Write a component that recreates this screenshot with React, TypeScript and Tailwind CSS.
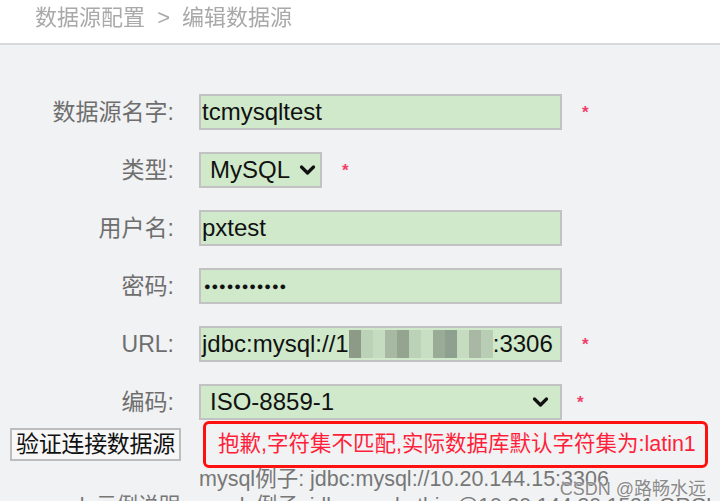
import { ReactNode } from 'react'

const FONT = { fontFamily: '"Liberation Sans", Arial, "Noto Sans CJK SC", sans-serif' }

function Star({ className = '' }: { className?: string }) {
  return <span className={`text-[17px] font-bold leading-none text-[#f0406a] ${className}`}>*</span>
}

function Row({ label, children }: { label: string; children: ReactNode }) {
  return (
    <div className="flex items-center h-9">
      <div className="w-[174px] shrink-0 text-right text-[23px] text-[#6e6e6e]">{label}</div>
      <div className="ml-[25px] flex items-center">{children}</div>
    </div>
  )
}

function Field({ children, className = 'w-[363px]' }: { children: ReactNode; className?: string }) {
  return (
    <div
      className={`h-9 ${className} flex items-center overflow-hidden whitespace-nowrap border-2 border-[#c2c2c2] bg-[#cfe9ca] px-[1px] text-[24px] leading-none text-[#111]`}
    >
      {children}
    </div>
  )
}

function Chevron() {
  return (
    <svg width="17" height="12" viewBox="0 0 17 12" className="shrink-0">
      <path d="M2.5 3 L8.5 9 L14.5 3" fill="none" stroke="#111" strokeWidth="3.2" strokeLinecap="round" strokeLinejoin="round" />
    </svg>
  )
}

const MOSAIC = ['#8d9a88', '#bcd2b8', '#c5dcc1', '#a7b8a3', '#95a391', '#bcd2b8', '#c8dfc4', '#9aab96', '#8ea08f', '#c5dcc1', '#a8b8a4', '#b9ccb4']

export default function App() {
  return (
    <div className="w-[720px] h-[501px] overflow-hidden bg-[#f1f2f4] relative" style={FONT}>
      <div className="h-[45px] bg-white border-b-2 border-[#d9d9d9] flex items-start">
        <div className="pl-[35px] pt-[1px] text-[22px] text-[#a9a9a9] blur-[0.3px]">
          数据源配置 <span className="mx-[6px]">&gt;</span> 编辑数据源
        </div>
      </div>

      <div className="pt-[49px] flex flex-col gap-[22px]">
        <Row label="数据源名字:">
          <Field>tcmysqltest</Field>
          <Star className="ml-[20px]" />
        </Row>
        <Row label="类型:">
          <Field className="w-[123px]">
            <span className="pl-[8px]">MySQL</span>
            <span className="ml-[9px]"><Chevron /></span>
          </Field>
          <Star className="ml-[20px]" />
        </Row>
        <Row label="用户名:">
          <Field>pxtest</Field>
        </Row>
        <Row label="密码:">
          <Field>
            <span className="pl-[2px] text-[11px] tracking-[0.9px]">●●●●●●●●●●●</span>
          </Field>
        </Row>
        <Row label="URL:">
          <Field>
            <span>jdbc:mysql://1</span>
            <span className="flex h-7 items-center">
              {MOSAIC.map((c, i) => (
                <span key={i} className="h-7 w-[12px]" style={{ backgroundColor: c }} />
              ))}
            </span>
            <span>:3306</span>
          </Field>
          <Star className="ml-[20px]" />
        </Row>
        <Row label="编码:">
          <Field>
            <span className="pl-[8px] flex-1">ISO-8859-1</span>
            <span className="mr-[10px]"><Chevron /></span>
          </Field>
          <Star className="ml-[15px]" />
        </Row>
      </div>

      <div className="mt-[1px] flex items-center h-[47px]">
        <div className="w-[203px] shrink-0 pl-[10px]">
          <button className="h-[33px] w-[171px] border-2 border-[#bdbdbd] bg-[#f7f7f7] text-[23px] text-[#111] leading-none whitespace-nowrap tracking-[-0.3px]">
            验证连接数据源
          </button>
        </div>
        <div className="h-[47px] w-[505px] rounded-[6px] border-[3px] border-[#ff1010] flex items-center pl-[12px] text-[21.5px] text-[#ff1f3a] whitespace-nowrap">
          抱歉,字符集不匹配,实际数据库默认字符集为:latin1
        </div>
      </div>

      <div className="pl-[199px] text-[21.5px] leading-[22px] text-[#777] whitespace-nowrap">
        mysql例子: jdbc:mysql://10.20.144.15:3306
      </div>
      <div className="flex mt-[4px] text-[21px] leading-[22px] text-[#777] whitespace-nowrap">
        <div className="w-[180px] text-right">oracle示例说明</div>
        <div className="ml-[19px]">oracle例子: jdbc:oracle:thin:@10.20.144.20:1521:ORCL</div>
      </div>

      <div className="absolute right-[14px] top-[476px] text-[18px] text-[#8a8a8a] [text-shadow:0_0_2px_#fff]">
        CSDN @路畅水远
      </div>
    </div>
  )
}
